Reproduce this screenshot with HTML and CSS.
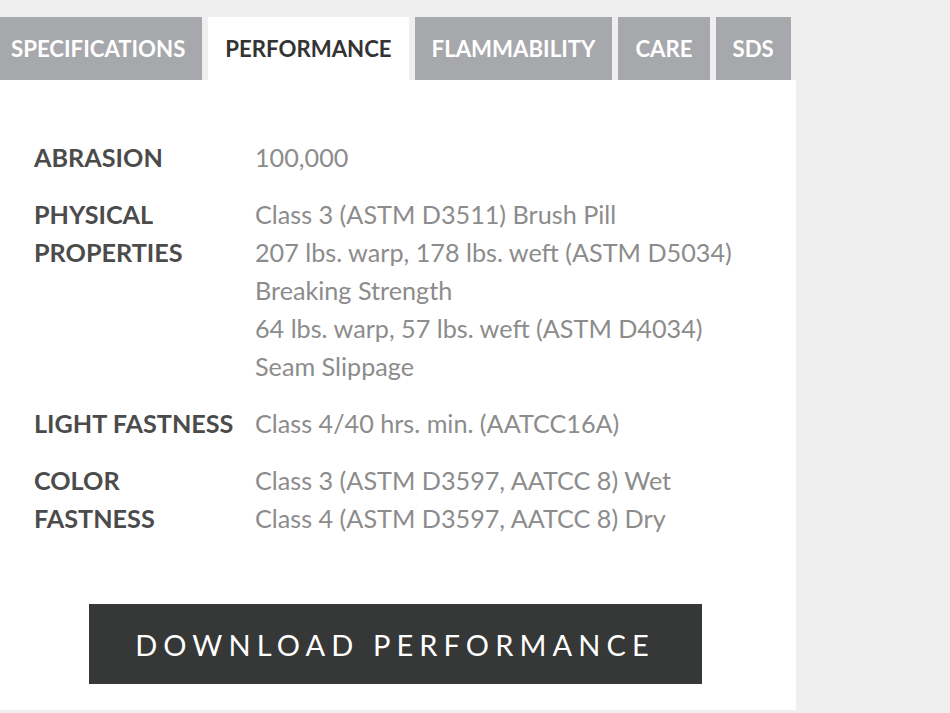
FILE: index.html
```html
<!DOCTYPE html>
<html>
<head>
<meta charset="utf-8">
<link rel="stylesheet" href="styles.css">
</head>
<body>
<div class="page">
  <div class="panel">
    <nav class="tabs">
      <div class="tab">SPECIFICATIONS</div>
      <div class="tab active">PERFORMANCE</div>
      <div class="tab">FLAMMABILITY</div>
      <div class="tab">CARE</div>
      <div class="tab">SDS</div>
    </nav>
    <div class="content">
      <div class="rows">
        <div class="row">
          <div class="label">ABRASION</div>
          <div class="value">100,000</div>
        </div>
        <div class="row">
          <div class="label">PHYSICAL<br>PROPERTIES</div>
          <div class="value">Class 3 (ASTM D3511) Brush Pill<br>207 lbs. warp, 178 lbs. weft (ASTM D5034)<br>Breaking Strength<br>64 lbs. warp, 57 lbs. weft (ASTM D4034)<br>Seam Slippage</div>
        </div>
        <div class="row">
          <div class="label">LIGHT FASTNESS</div>
          <div class="value">Class 4/40 hrs. min. (AATCC16A)</div>
        </div>
        <div class="row">
          <div class="label">COLOR<br>FASTNESS</div>
          <div class="value">Class 3 (ASTM D3597, AATCC 8) Wet<br>Class 4 (ASTM D3597, AATCC 8) Dry</div>
        </div>
      </div>
      <div class="actions">
        <a class="download">DOWNLOAD PERFORMANCE</a>
      </div>
    </div>
  </div>
</div>
</body>
</html>
```

FILE: styles.css
```css
html, body {
  margin: 0;
  padding: 0;
  background: #efefef;
  font-family: Lato, "Open Sans", sans-serif;
}
.page {
  width: 950px;
  height: 713px;
  overflow: hidden;
  padding-top: 17px;
  box-sizing: border-box;
}
.panel {
  width: 796px;
}
.tabs {
  display: flex;
  gap: 6px;
  margin-left: -6px;
  height: 63px;
}
.tab {
  background: #a7a8ab;
  color: #ffffff;
  font-weight: 700;
  font-size: 22.2px;
  padding: 0 17px;
  display: flex;
  align-items: center;
}
.tab.active {
  background: #ffffff;
  color: #333333;
}
.content {
  background: #ffffff;
  padding: 58px 0 26px 34px;
}
.rows {
  display: flex;
  flex-direction: column;
  gap: 19px;
}
.row {
  display: grid;
  grid-template-columns: 221px 1fr;
  font-size: 25.2px;
  line-height: 38px;
}
.label {
  font-weight: 700;
  color: #4b4b4b;
}
.value {
  color: #8c8c8c;
}
.actions {
  display: flex;
  justify-content: center;
  padding-top: 67px;
  margin-left: -34px;
}
.download {
  width: 613px;
  height: 80px;
  background: #363737;
  color: #ffffff;
  font-size: 29px;
  letter-spacing: 6.1px;
  display: flex;
  align-items: center;
  justify-content: center;
  margin-left: -6px;
}
```
